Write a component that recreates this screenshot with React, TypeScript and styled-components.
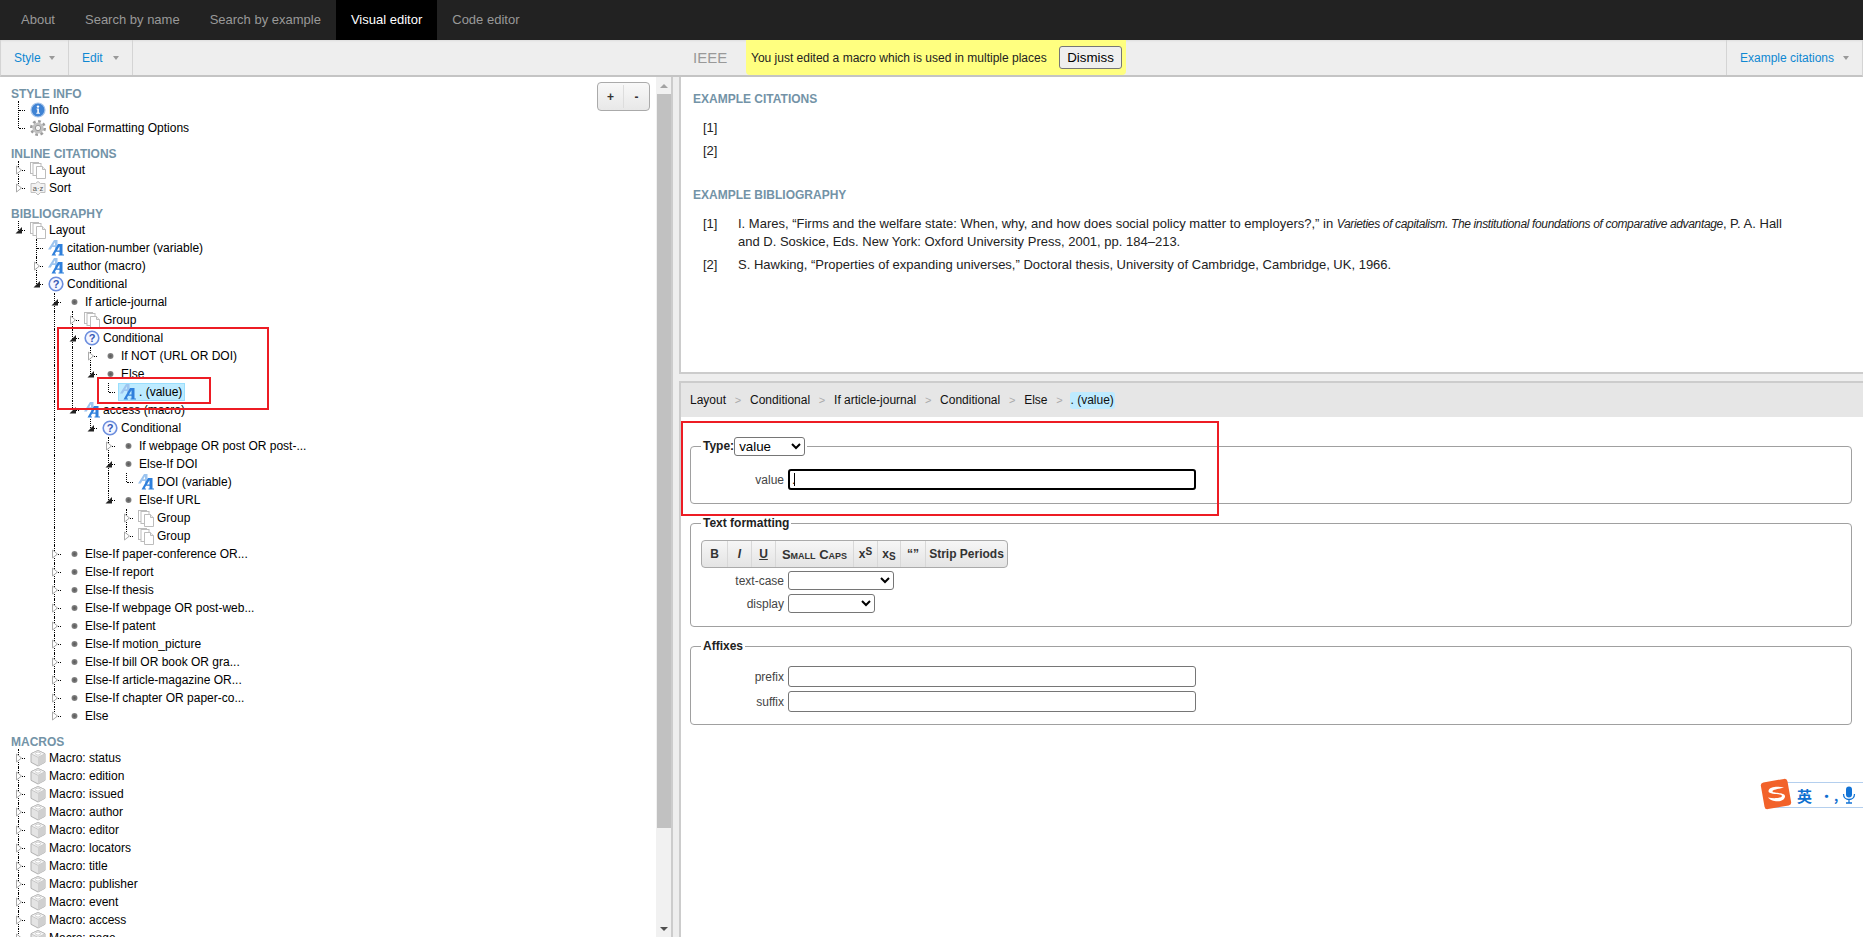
import React from "react";
import styled, { createGlobalStyle } from "styled-components";

const Global = createGlobalStyle`
  html, body { margin: 0; padding: 0; height: 100%; overflow: hidden; background: #fff; }
  body { font-family: "Liberation Sans", Arial, sans-serif; font-size: 12px; color: #000; }
  * { box-sizing: border-box; }
`;

const Page = styled.div`
  position: relative; width: 1863px; height: 937px; display: flex; flex-direction: column; overflow: hidden;
`;

/* top navigation */
const Nav = styled.nav`
  height: 40px; flex: none; background: #222; display: flex; padding-left: 6px;
`;
const NavItem = styled.a<{ $active?: boolean }>`
  padding: 0 15px; line-height: 40px; font-size: 13px; color: ${p => (p.$active ? "#fff" : "#999")};
  background: ${p => (p.$active ? "#000" : "transparent")};
`;

/* toolbar */
const Toolbar = styled.div`
  height: 37px; flex: none; background: #eee; border-bottom: 2px solid #c4c4c4; border-left: 1px solid #d4d4d4;
  border-right: 1px solid #d4d4d4; box-shadow: inset 0 2px 2px -1px #ddd; display: flex; align-items: stretch;
`;
const LeftTools = styled.div`
  width: 678px; flex: none; display: flex;
`;
const MenuButton = styled.div<{ $w: number; $side?: "left" | "right" }>`
  width: ${p => p.$w}px; flex: none; display: flex; align-items: center; justify-content: space-between;
  padding: 0 13px; font-size: 12px; color: #0f88d2;
  ${p => (p.$side === "left" ? "border-left: 1px solid #d4d4d4;" : "border-right: 1px solid #d4d4d4;")}
`;
const Caret = styled.span`
  width: 0; height: 0; border-left: 3px solid transparent; border-right: 3px solid transparent; border-top: 4px solid #999;
`;
const StyleName = styled.div`
  margin-left: 14px; font-size: 15px; line-height: 36px; width: 53px; flex: none; color: #999;
`;
const Notice = styled.div`
  width: 380px; flex: none; height: 35px; background: #ffff80; border-radius: 0 0 4px 4px; display: flex;
  align-items: center; justify-content: space-between; padding: 0 4px 0 5px; font-size: 12px; color: #222;
`;
const DismissButton = styled.button`
  width: 63px; height: 23px; padding: 0; background: #efefef; border: 1px solid #767676; border-radius: 3px;
  font: 13.33px "Liberation Sans", Arial, sans-serif; color: #000;
`;
const Spacer = styled.div` flex: 1; `;

/* body */
const Body = styled.div`
  flex: 1; min-height: 0; display: flex; background: #eee; gap: 6px;
`;
const LeftPanel = styled.div`
  position: relative; width: 673px; flex: none; display: flex; background: #fff; border-right: 2px solid #ccc;
`;
const Tree = styled.div`
  flex: 1; min-width: 0; overflow: hidden; padding: 9px 0 0 0;
`;
const SectionHeading = styled.div`
  height: 15px; line-height: 17px; font-size: 12px; font-weight: bold; color: #7393a7; text-transform: uppercase;
  padding-left: 11px; margin-top: 9px;
  &:first-child { margin-top: 0; }
`;
const Row = styled.div`
  display: flex; height: 18px; line-height: 18px; padding-left: 12px; font-size: 12px; white-space: nowrap;
`;
const Guide = styled.span<{ $on: boolean }>`
  width: 18px; height: 18px; flex: none; position: relative;
  ${p => p.$on && `&::before { content: ""; position: absolute; left: 6px; top: 0; bottom: 0; border-left: 1px dotted #000; }`}
`;
const Toggle = styled.span<{ $last: boolean }>`
  width: 18px; height: 18px; flex: none; position: relative;
  &::before { content: ""; position: absolute; left: 6px; top: 0; height: ${p => (p.$last ? "9px" : "18px")}; border-left: 1px dotted #000; }
  &::after { content: ""; position: absolute; left: 7px; top: 9px; width: 6px; border-top: 1px dotted #000; }
  svg { position: absolute; left: 0; top: 0; z-index: 1; }
`;
const Node = styled.span<{ $selected?: boolean }>`
  display: flex; height: 18px; color: #000;
  ${p => p.$selected && `background: #beebff; box-shadow: inset 0 0 0 1px #99defd; margin-left: -2px; padding: 0 3px 0 2px;`}
`;
const IconCell = styled.span`
  width: 18px; height: 18px; flex: none; display: block; margin-right: 1px;
  svg { display: block; }
`;
const ZoomButtons = styled.div`
  position: absolute; left: 597px; top: 5px; width: 53px; height: 29px; display: flex; border: 1px solid #aaa;
  border-radius: 4px; background: linear-gradient(#f8f8f8, #e8e8e8); font-size: 12px; font-weight: bold; color: #333;
`;
const ZoomButton = styled.span`
  flex: 1; display: flex; align-items: center; justify-content: center;
  & + & { border-left: 1px solid #ddd; margin: 2px 0; }
`;
const Scrollbar = styled.div`
  width: 15px; flex: none; background: #f1f1f1; display: flex; flex-direction: column; align-items: stretch; position: relative;
`;
const ScrollArrow = styled.div<{ $down?: boolean }>`
  height: 17px; flex: none; display: flex; align-items: center; justify-content: center;
  &::before { content: ""; width: 0; height: 0; border-left: 4px solid transparent; border-right: 4px solid transparent;
    ${p => (p.$down ? "border-top: 4px solid #505050;" : "border-bottom: 4px solid #a3a3a3;")} }
`;
const ScrollThumb = styled.div`
  height: 734px; flex: none; margin: 0 0 0 1px; background: #c1c1c1;
`;
const ScrollTrack = styled.div` flex: 1; `;

/* right side */
const RightColumn = styled.div`
  flex: 1; min-width: 0; display: flex; flex-direction: column; gap: 7px;
`;
const Examples = styled.div`
  height: 297px; flex: none; background: #fff; border-left: 2px solid #ccc; border-bottom: 2px solid #ccc; padding: 14px 12px 0;
`;
const ExamplesHeading = styled.div`
  height: 15px; line-height: 17px; font-size: 12px; font-weight: bold; color: #7393a7; text-transform: uppercase;
  & ~ & { margin-top: 27px; }
`;
const EntryList = styled.div`
  display: flex; flex-direction: column; gap: 5px; margin-top: 13px;
`;
const Entry = styled.div`
  display: flex; padding-left: 10px; font-size: 13px; line-height: 18px; color: #222; min-height: 18px;
`;
const EntryNum = styled.span` width: 35px; flex: none; `;
const EntryText = styled.span` max-width: 1060px; `;
const BookTitle = styled.i` font-size: 12px; letter-spacing: -0.35px; `;

const Editor = styled.div`
  flex: 1; min-height: 0; background: #fff; border-left: 2px solid #ccc; border-top: 2px solid #ccc;
  display: flex; flex-direction: column;
`;
const Breadcrumb = styled.div`
  height: 34px; flex: none; background: #e6e6e6; display: flex; align-items: center; padding-left: 9px; font-size: 12px; color: #111;
`;
const CrumbSep = styled.span`
  color: #aaa; width: 24px; text-align: center; font-size: 11px; flex: none;
`;
const CrumbCurrent = styled.span`
  background: #beebff; border-radius: 3px; padding: 0 1px; margin-left: -2px; line-height: 17px;
`;
const Form = styled.div`
  padding: 20px 11px 0 9px; display: flex; flex-direction: column; gap: 12px;
`;
const Field = styled.fieldset<{ $top: number; $bottom: number }>`
  margin: 0; min-width: 0; border: 1px solid #a0a0a0; border-radius: 4px; padding: ${p => p.$top}px 10px ${p => p.$bottom}px;
`;
const Legend = styled.legend`
  padding: 0 2px; font-size: 12px; font-weight: bold; color: #222; line-height: 15px; display: flex; align-items: center; gap: 0;
`;
const FormRow = styled.div`
  display: flex; align-items: center; gap: 4px;
`;
const FormRows = styled.div`
  & > div + div { margin-top: 4px; }
`;
const FieldLabel = styled.span`
  width: 83px; flex: none; text-align: right; font-size: 12px; color: #444;
`;
const NativeSelect = styled.select<{ $w: number }>`
  width: ${p => p.$w}px; height: 19px; padding: 0; background: #fff; border: 1px solid #767676; border-radius: 3px;
  font: 13.33px "Liberation Sans", Arial, sans-serif; color: #000;
`;
const InputWrap = styled.span`
  position: relative; display: block; width: 408px; height: 21px; flex: none;
`;
const TextInput = styled.input<{ $focused?: boolean }>`
  display: block; width: 100%; height: 100%; padding: 0 2px; background: #fff; border-radius: 3px; outline: none;
  font: 13.33px "Liberation Sans", Arial, sans-serif; color: #000;
  border: ${p => (p.$focused ? "2px solid #000" : "1px solid #767676")};
`;
const TextCaret = styled.span`
  position: absolute; left: 6px; top: 4px; width: 1px; height: 13px; background: #000;
`;
const FormatBar = styled.div`
  width: 307px; height: 28px; display: flex; border: 1px solid #aaa; border-radius: 4px;
  background: linear-gradient(#f6f6f6, #e4e4e4); margin-bottom: 3px;
`;
const FormatButton = styled.span<{ $w: number }>`
  width: ${p => p.$w}px; flex: none; display: flex; align-items: center; justify-content: center;
  font-size: 12px; font-weight: bold; color: #333; white-space: nowrap;
  & + & { border-left: 1px solid #d8d8d8; }
  sup, sub { font-size: 10px; line-height: 0; }
  sup { margin-top: -5px; }
  sub { margin-top: 5px; }
`;
const SmallCaps = styled.span` font-variant: small-caps; font-size: 13px; `;

/* annotations and overlay */
const RedBox = styled.div<{ $x: number; $y: number; $w: number; $h: number }>`
  position: absolute; left: ${p => p.$x}px; top: ${p => p.$y}px; width: ${p => p.$w}px; height: ${p => p.$h}px;
  border: 2px solid #ed1c24; pointer-events: none; z-index: 5;
`;
const ImeBar = styled.div`
  position: absolute; right: 0; top: 782px; width: 92px; height: 26px; background: #fff; border: 1px solid #b4cfee; border-right: 0;
  display: flex; align-items: center; color: #0f6fd0; z-index: 6; padding-left: 25px; font-weight: bold;
  font-family: "Noto Sans CJK SC", sans-serif; font-size: 15px;
`;
const ImeLogo = styled.span`
  position: absolute; left: -12px; top: -5px; svg { display: block; }
`;
const ImeDots = styled.span` margin-left: 8px; width: 16px; font-size: 13px; letter-spacing: 1px; `;
const ImeMic = styled.span` margin-left: 6px; display: flex; `;

/* icons */
const Dotted = () => (
  <svg width="18" height="18" viewBox="0 0 18 18">
    <defs><radialGradient id="dotg"><stop offset="0" stopColor="#555" /><stop offset="1" stopColor="#888" /></radialGradient></defs>
    <circle cx="8.5" cy="9" r="3" fill="url(#dotg)" />
  </svg>
);
const InfoIcon = () => (
  <svg width="18" height="18" viewBox="0 0 18 18">
    <circle cx="8" cy="9" r="7" fill="#3f83d4" stroke="#a8c6ea" strokeWidth="1.2" />
    <circle cx="8" cy="5.6" r="1.2" fill="#fff" />
    <path d="M6.6 7.6h2.3v4.2h1v1H6.3v-1h1V8.6h-.7z" fill="#fff" />
  </svg>
);
const GearIcon = () => (
  <svg width="18" height="18" viewBox="0 0 18 18">
    <circle cx="8" cy="9" r="6.7" fill="none" stroke="#9c9c9c" strokeWidth="2.6" strokeDasharray="2.7 2.55" />
    <circle cx="8" cy="9" r="5.6" fill="#c2c2c2" />
    <circle cx="8" cy="9" r="2.7" fill="#f4f4f4" stroke="#999" />
  </svg>
);
const PagesIcon = () => (
  <svg width="18" height="18" viewBox="0 0 18 18">
    <g fill="#fff" stroke="#bcbcbc">
      <rect x="0.5" y="1.5" width="8" height="11" />
      <rect x="3" y="2.5" width="8" height="12" />
      <path d="M6.500 5.500h6l3 3v9h-9z" />
      <path d="M12.500 5.500v3h3" fill="#eee" />
    </g>
  </svg>
);
const SortIcon = () => (
  <svg width="18" height="18" viewBox="0 0 18 18">
    <path d="M1 4.500h4.500L8 2.500l2.500 2H15v9h-4.500L8 16l-2.500-2.500H1z" fill="#f2f2f2" stroke="#c0c0c0" />
    <text x="8" y="11.500" textAnchor="middle" fontSize="7.500" fontFamily="Liberation Sans" fill="#555">a·z</text>
  </svg>
);
const AaIcon = () => (
  <svg width="18" height="18" viewBox="0 0 18 18">
    <path d="M0 10.500L6 1h3.500v9.500H7V8H4.200L2.800 10.500zM5.200 6.300H7V3.300z" fill="#9cc4ef" fillRule="evenodd" />
    <path d="M3.500 16.500L10 5h4.500v10.500H16v1h-5.500v-1h1v-2.700H8L6.700 15.500H8v1zM8.900 11.400h2.600V7.200z" fill="#2f80dc" fillRule="evenodd" />
  </svg>
);
const QuestionIcon = () => (
  <svg width="18" height="18" viewBox="0 0 18 18">
    <circle cx="8" cy="9" r="6.800" fill="#f5f7ff" stroke="#6c8ede" strokeWidth="1.600" />
    <text x="8" y="13" textAnchor="middle" fontSize="11" fontWeight="bold" fontFamily="Liberation Sans" fill="#3557b5">?</text>
  </svg>
);
const CubeIcon = () => (
  <svg width="18" height="18" viewBox="0 0 18 18">
    <path d="M8 1.500l7 3.200v8.600l-7 3.700-7-3.700V4.700z" fill="#e4e4e4" stroke="#b0b0b0" />
    <path d="M1 4.700l7 3.600 7-3.600L8 1.500z" fill="#f6f6f6" stroke="#b0b0b0" strokeWidth=".6" />
    <path d="M8 8.300V17l7-3.700V4.700z" fill="#d0d0d0" />
    <ellipse cx="8" cy="4.600" rx="2.600" ry="1.500" fill="#fff" stroke="#b0b0b0" strokeWidth=".6" />
  </svg>
);
const ClosedArrow = () => (
  <svg width="18" height="18" viewBox="0 0 18 18"><path d="M4.500 5l5 4-5 4z" fill="#fff" stroke="#aaa" /></svg>
);
const OpenArrow = () => (
  <svg width="18" height="18" viewBox="0 0 18 18"><path d="M3.500 12.500h6.500v-6.500z" fill="#222" /></svg>
);

type IconName = "info" | "gear" | "pages" | "sort" | "aa" | "q" | "dot" | "cube";
const icons: Record<IconName, React.FC> = {
  info: InfoIcon, gear: GearIcon, pages: PagesIcon, sort: SortIcon, aa: AaIcon, q: QuestionIcon, dot: Dotted, cube: CubeIcon,
};

interface TreeNode { label: string; icon: IconName; closed?: boolean; selected?: boolean; children?: TreeNode[]; }

const n = (label: string, icon: IconName, children?: TreeNode[]): TreeNode => ({ label, icon, children });
const c = (label: string, icon: IconName): TreeNode => ({ label, icon, closed: true });

const styleInfo = [n("Info", "info"), n("Global Formatting Options", "gear")];
const inlineCitations = [c("Layout", "pages"), c("Sort", "sort")];
const bibliography = [
  n("Layout", "pages", [
    n("citation-number (variable)", "aa"),
    c("author (macro)", "aa"),
    n("Conditional", "q", [
      n("If article-journal", "dot", [
        c("Group", "pages"),
        n("Conditional", "q", [
          c("If NOT (URL OR DOI)", "dot"),
          n("Else", "dot", [{ label: ". (value)", icon: "aa", selected: true }]),
        ]),
        n("access (macro)", "aa", [
          n("Conditional", "q", [
            c("If webpage OR post OR post-...", "dot"),
            n("Else-If DOI", "dot", [n("DOI (variable)", "aa")]),
            n("Else-If URL", "dot", [c("Group", "pages"), c("Group", "pages")]),
          ]),
        ]),
      ]),
      c("Else-If paper-conference OR...", "dot"),
      c("Else-If report", "dot"),
      c("Else-If thesis", "dot"),
      c("Else-If webpage OR post-web...", "dot"),
      c("Else-If patent", "dot"),
      c("Else-If motion_picture", "dot"),
      c("Else-If bill OR book OR gra...", "dot"),
      c("Else-If article-magazine OR...", "dot"),
      c("Else-If chapter OR paper-co...", "dot"),
      c("Else", "dot"),
    ]),
  ]),
];
const macros = ["status", "edition", "issued", "author", "editor", "locators", "title", "publisher", "event", "access", "page"]
  .map(m => c(`Macro: ${m}`, "cube"));

function TreeRows({ nodes, prefix = [] }: { nodes: TreeNode[]; prefix?: boolean[] }) {
  return (
    <>
      {nodes.map((node, i) => {
        const last = i === nodes.length - 1;
        const Icon = icons[node.icon];
        return (
          <React.Fragment key={node.label + i}>
            <Row>
              {prefix.map((on, k) => <Guide key={k} $on={on} />)}
              <Toggle $last={last}>
                {node.closed && <ClosedArrow />}
                {node.children && <OpenArrow />}
              </Toggle>
              <Node $selected={node.selected}>
                <IconCell><Icon /></IconCell>
                {node.label}
              </Node>
            </Row>
            {node.children && <TreeRows nodes={node.children} prefix={[...prefix, !last]} />}
          </React.Fragment>
        );
      })}
    </>
  );
}

const crumbs = ["Layout", "Conditional", "If article-journal", "Conditional", "Else"];

export default function App() {
  return (
    <Page>
      <Global />
      <Nav>
        <NavItem>About</NavItem>
        <NavItem>Search by name</NavItem>
        <NavItem>Search by example</NavItem>
        <NavItem $active>Visual editor</NavItem>
        <NavItem>Code editor</NavItem>
      </Nav>
      <Toolbar>
        <LeftTools>
          <MenuButton $w={68}>Style <Caret /></MenuButton>
          <MenuButton $w={64}>Edit <Caret /></MenuButton>
        </LeftTools>
        <StyleName>IEEE</StyleName>
        <Notice>
          You just edited a macro which is used in multiple places
          <DismissButton>Dismiss</DismissButton>
        </Notice>
        <Spacer />
        <MenuButton $w={136} $side="left">Example citations <Caret /></MenuButton>
      </Toolbar>
      <Body>
        <LeftPanel>
          <Tree>
            <SectionHeading>Style Info</SectionHeading>
            <TreeRows nodes={styleInfo} />
            <SectionHeading>Inline Citations</SectionHeading>
            <TreeRows nodes={inlineCitations} />
            <SectionHeading>Bibliography</SectionHeading>
            <TreeRows nodes={bibliography} />
            <SectionHeading>Macros</SectionHeading>
            <TreeRows nodes={macros} />
          </Tree>
          <ZoomButtons>
            <ZoomButton>+</ZoomButton>
            <ZoomButton>-</ZoomButton>
          </ZoomButtons>
          <Scrollbar>
            <ScrollArrow />
            <ScrollThumb />
            <ScrollTrack />
            <ScrollArrow $down />
          </Scrollbar>
        </LeftPanel>
        <RightColumn>
          <Examples>
            <ExamplesHeading>Example Citations</ExamplesHeading>
            <EntryList>
              <Entry><EntryNum>[1]</EntryNum></Entry>
              <Entry><EntryNum>[2]</EntryNum></Entry>
            </EntryList>
            <ExamplesHeading>Example Bibliography</ExamplesHeading>
            <EntryList>
              <Entry>
                <EntryNum>[1]</EntryNum>
                <EntryText>
                  I. Mares, “Firms and the welfare state: When, why, and how does social policy matter to employers?,” in <BookTitle>Varieties of capitalism. The institutional foundations of comparative advantage</BookTitle>, P. A. Hall and D. Soskice, Eds. New York: Oxford University Press, 2001, pp. 184–213.
                </EntryText>
              </Entry>
              <Entry>
                <EntryNum>[2]</EntryNum>
                <EntryText>S. Hawking, “Properties of expanding universes,” Doctoral thesis, University of Cambridge, Cambridge, UK, 1966.</EntryText>
              </Entry>
            </EntryList>
          </Examples>
          <Editor>
            <Breadcrumb>
              {crumbs.map((t, i) => (
                <React.Fragment key={i}>{t}<CrumbSep>&gt;</CrumbSep></React.Fragment>
              ))}
              <CrumbCurrent>. (value)</CrumbCurrent>
            </Breadcrumb>
            <Form>
              <Field $top={13} $bottom={13}>
                <Legend>
                  Type:
                  <NativeSelect $w={71} defaultValue="value"><option>value</option></NativeSelect>
                </Legend>
                <FormRow>
                  <FieldLabel>value</FieldLabel>
                  <InputWrap>
                    <TextInput $focused defaultValue="." />
                    <TextCaret />
                  </InputWrap>
                </FormRow>
              </Field>
              <Field $top={9} $bottom={13}>
                <Legend>Text formatting</Legend>
                <FormatBar>
                  <FormatButton $w={25}>B</FormatButton>
                  <FormatButton $w={24}><i>I</i></FormatButton>
                  <FormatButton $w={24}><u>U</u></FormatButton>
                  <FormatButton $w={78}><SmallCaps>Small Caps</SmallCaps></FormatButton>
                  <FormatButton $w={24}>x<sup>S</sup></FormatButton>
                  <FormatButton $w={23}>x<sub>S</sub></FormatButton>
                  <FormatButton $w={25}>“”</FormatButton>
                  <FormatButton $w={82}>Strip Periods</FormatButton>
                </FormatBar>
                <FormRows>
                  <FormRow>
                    <FieldLabel>text-case</FieldLabel>
                    <NativeSelect $w={106}><option></option></NativeSelect>
                  </FormRow>
                  <FormRow>
                    <FieldLabel>display</FieldLabel>
                    <NativeSelect $w={87}><option></option></NativeSelect>
                  </FormRow>
                </FormRows>
              </Field>
              <Field $top={12} $bottom={12}>
                <Legend>Affixes</Legend>
                <FormRows>
                  <FormRow>
                    <FieldLabel>prefix</FieldLabel>
                    <InputWrap><TextInput /></InputWrap>
                  </FormRow>
                  <FormRow>
                    <FieldLabel>suffix</FieldLabel>
                    <InputWrap><TextInput /></InputWrap>
                  </FormRow>
                </FormRows>
              </Field>
            </Form>
          </Editor>
        </RightColumn>
      </Body>
      <RedBox $x={57} $y={327} $w={212} $h={83} />
      <RedBox $x={97} $y={377} $w={114} $h={27} />
      <RedBox $x={681} $y={421} $w={538} $h={95} />
      <ImeBar>
        <ImeLogo>
          <svg width="32" height="32" viewBox="0 0 32 32">
            <rect x="2.500" y="2.500" width="27" height="27" rx="3" fill="#f2622a" transform="rotate(-10 16 16)" />
            <path d="M24 9.500C18 8 9 8.500 8.500 13c-.4 4 13 2 13.500 5 .3 2-8 3-14 1.500C11 24 24 25.500 25 18.500 25.600 14 13 15.500 12.500 13.500 12 11.500 19 11 24 9.500z" fill="#fff" />
          </svg>
        </ImeLogo>
        英
        <ImeDots>•,</ImeDots>
        <ImeMic>
          <svg width="14" height="18" viewBox="0 0 14 18">
            <rect x="4" y="0.500" width="6" height="11" rx="3" fill="#1273d6" />
            <path d="M1.500 8c0 3.500 2.500 5.500 5.500 5.500S12.500 11.500 12.500 8M7 13.500V17M4 17h6" fill="none" stroke="#1273d6" strokeWidth="1.300" />
          </svg>
        </ImeMic>
      </ImeBar>
    </Page>
  );
}
